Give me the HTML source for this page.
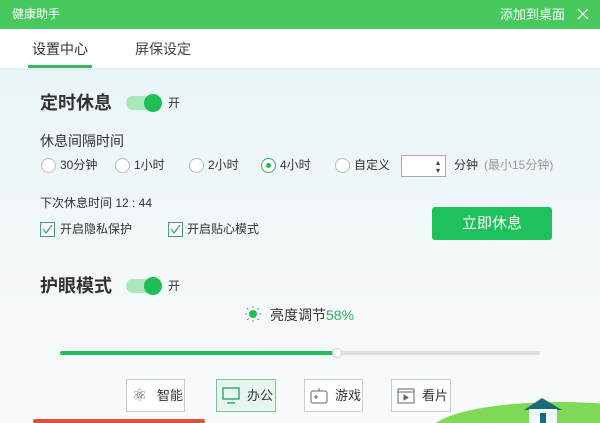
<!DOCTYPE html><html><head><meta charset="utf-8"><style>
*{margin:0;padding:0;box-sizing:border-box}
html,body{width:600px;height:423px;overflow:hidden}
body{position:relative;font-family:"Liberation Sans","Noto Sans CJK SC",sans-serif;color:#333;background:linear-gradient(180deg,#eaf5f8 68px,#f3f8fa 250px,#f8fafb 423px);line-height:1}
.a{position:absolute;white-space:nowrap}
.top{left:0;top:0;width:600px;height:29px;background:#48c95f;color:#fff;font-size:12px}
.tabs{left:0;top:29px;width:600px;height:39px;background:#fff}
.tog{width:36px;height:14px;border-radius:7px;background:#a9e8b8}
.tog i{position:absolute;right:0;top:-2px;width:18px;height:18px;border-radius:50%;background:#1fbf55}
.r{width:15px;height:15px;border:1px solid #bbb;border-radius:50%;background:#fff}
.cb{width:15px;height:15px;border:1px solid #4a9b7a;background:#fff}
.mb{top:379px;height:33px;border:1px solid #ccc;background:#fff;font-size:13px}
</style></head><body>
<div class="a top"><span class="a" style="left:12px;top:8px">健康助手</span><span class="a" style="left:500px;top:8px;font-size:13px">添加到桌面</span>
<svg class="a" style="left:577px;top:8px" width="12" height="12"><path d="M1 1L11 11M11 1L1 11" stroke="#fff" stroke-width="1.2"/></svg></div>
<div class="a tabs"><span class="a" style="left:32px;top:13px;font-size:14px">设置中心</span><span class="a" style="left:135px;top:13px;font-size:14px;color:#444">屏保设定</span>
<div class="a" style="left:28px;top:36px;width:64px;height:3px;background:#3bb860"></div></div>
<div class="a" style="left:0;top:68px;width:600px;height:2px;background:#e4eef2"></div>
<span class="a" style="left:40px;top:94px;font-size:18px;font-weight:bold;color:#333">定时休息</span>
<div class="a tog" style="left:126px;top:96px"><i></i></div><span class="a" style="left:168px;top:97px;font-size:12px">开</span>
<span class="a" style="left:40px;top:134px;font-size:14px">休息间隔时间</span>
<div class="a r" style="left:41px;top:158px"></div><span class="a" style="left:60px;top:159px;font-size:12px">30分钟</span>
<div class="a r" style="left:115px;top:158px"></div><span class="a" style="left:134px;top:159px;font-size:12px">1小时</span>
<div class="a r" style="left:189px;top:158px"></div><span class="a" style="left:208px;top:159px;font-size:12px">2小时</span>
<div class="a r" style="left:261px;top:158px;border-color:#2bb35a"><i class="a" style="left:4px;top:4px;width:5px;height:5px;border-radius:50%;background:#1fbf55"></i></div><span class="a" style="left:280px;top:159px;font-size:12px">4小时</span>
<div class="a r" style="left:335px;top:158px"></div><span class="a" style="left:354px;top:159px;font-size:12px">自定义</span>
<div class="a" style="left:401px;top:155px;width:45px;height:22px;border:1px solid #aaa;background:#fff"><span class="a" style="left:34px;top:3px;font-size:8px;line-height:8px">▴<br>▾</span></div>
<span class="a" style="left:454px;top:159px;font-size:12px">分钟</span><span class="a" style="left:484px;top:159px;font-size:12px;color:#999">(最小15分钟)</span>
<span class="a" style="left:40px;top:197px;font-size:12px">下次休息时间 12 : 44</span>
<div class="a cb" style="left:40px;top:222px"></div><svg class="a" style="left:42px;top:224px" width="11" height="11"><path d="M1 5L4 9L10 1" stroke="#3a9a70" fill="none" stroke-width="1.2"/></svg><span class="a" style="left:60px;top:223px;font-size:12px">开启隐私保护</span>
<div class="a cb" style="left:168px;top:222px"></div><svg class="a" style="left:170px;top:224px" width="11" height="11"><path d="M1 5L4 9L10 1" stroke="#3a9a70" fill="none" stroke-width="1.2"/></svg><span class="a" style="left:187px;top:223px;font-size:12px">开启贴心模式</span>
<div class="a" style="left:432px;top:207px;width:120px;height:33px;background:#1fc15a;border-radius:3px;color:#fff;font-size:15px;text-align:center;line-height:33px">立即休息</div>
<span class="a" style="left:40px;top:277px;font-size:18px;font-weight:bold">护眼模式</span>
<div class="a tog" style="left:126px;top:279px"><i></i></div><span class="a" style="left:168px;top:280px;font-size:12px">开</span>
<svg class="a" style="left:244px;top:305px" width="18" height="18"><circle cx="9" cy="9" r="4" fill="#1fbf55"/><g stroke="#888" stroke-width="1"><path d="M9 1v2M9 15v2M1 9h2M15 9h2M3 3l1.5 1.5M13.5 13.5L15 15M3 15l1.5-1.5M13.5 4.5L15 3"/></g></svg>
<span class="a" style="left:270px;top:308px;font-size:14px">亮度调节<span style="color:#2bb35a">58%</span></span>
<div class="a" style="left:60px;top:351px;width:480px;height:4px;background:#ddd;border-radius:2px"></div>
<div class="a" style="left:60px;top:351px;width:277px;height:4px;background:#22c05a;border-radius:2px"></div>
<div class="a" style="left:332px;top:348px;width:10px;height:10px;border-radius:50%;background:#fff;border:1px solid #ccc"></div>
<svg class="a" style="left:0;top:380px" width="600" height="43">
<rect x="33" y="39" width="172" height="4" rx="2" fill="#e84a3c"/>
<ellipse cx="560" cy="52" rx="130" ry="30" fill="#7ed957"/>
<path d="M524 30L542 18L562 30Z" fill="#1b6a78"/><rect x="529" y="29" width="28" height="14" fill="#eef7fb"/><rect x="540" y="33" width="6" height="10" fill="#1b6a78"/>
</svg>
<div class="a mb" style="left:126px;width:59px"><span class="a" style="left:5px;top:7px;font-size:17px;color:#666">⚛</span><span class="a" style="left:30px;top:9px">智能</span></div>
<div class="a mb" style="left:216px;width:60px;border-color:#7cc79a;background:#e6f6ec"><svg class="a" style="left:5px;top:7px" width="18" height="18"><rect x="1" y="1" width="16" height="11" fill="none" stroke="#2a9a6a" stroke-width="1.3"/><path d="M5 16h8" stroke="#2a9a6a" stroke-width="1.3"/></svg><span class="a" style="left:30px;top:9px">办公</span></div>
<div class="a mb" style="left:304px;width:59px"><svg class="a" style="left:5px;top:7px" width="18" height="18"><rect x="1" y="4" width="16" height="12" rx="2" fill="none" stroke="#666"/><path d="M9 1v3M4 10h4M6 8v4" stroke="#666"/></svg><span class="a" style="left:30px;top:9px">游戏</span></div>
<div class="a mb" style="left:391px;width:60px"><svg class="a" style="left:5px;top:7px" width="18" height="18"><rect x="1" y="2" width="16" height="14" fill="none" stroke="#666"/><path d="M1 5h16M7 8v5l4-2.5z" stroke="#666" fill="#666"/></svg><span class="a" style="left:30px;top:9px">看片</span></div>
</body></html>
